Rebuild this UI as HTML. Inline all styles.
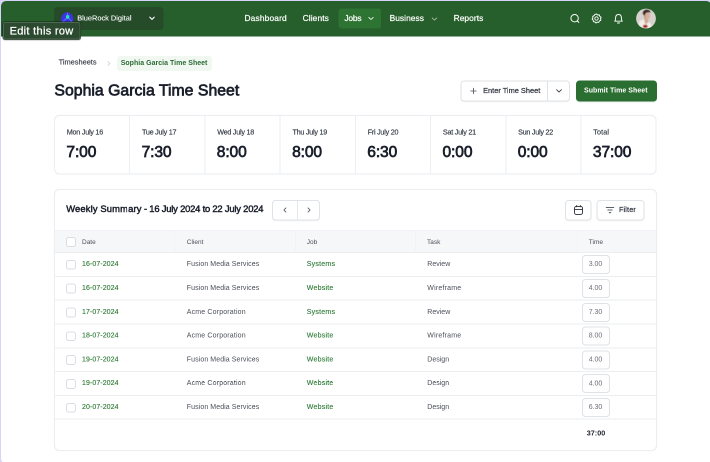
<!DOCTYPE html>
<html>
<head>
<meta charset="utf-8">
<title>Sophia Garcia Time Sheet</title>
<style>
*{box-sizing:border-box;margin:0;padding:0}
html,body{width:710px;height:462px;overflow:hidden;background:#d7d3fa;font-family:"Liberation Sans",sans-serif}
#bg{left:1px;top:1px;width:710.5px;height:462.5px;background:#fff;border-radius:5px}
#S{position:absolute;left:0;top:0;width:1420px;height:924px;transform:scale(.5);transform-origin:0 0;will-change:transform}
#L{position:absolute;left:0;top:0;width:710px;height:462px;zoom:2}
#L div,#L svg{position:absolute}
#hdr{left:1px;top:1px;width:710.5px;height:35.5px;background:#265f2b;border-radius:5px 5px 0 0}
.ws{left:54px;top:7px;width:109.5px;height:23px;background:#254b29;border-radius:4px}
.w{color:#fff;white-space:nowrap;line-height:1}
.nav{font-size:8.4px;-webkit-text-stroke:0.2px #fff}
.pill{left:338.4px;top:8.5px;width:43.1px;height:20px;background:#2d7433;border-radius:3px}
.tip{left:3px;top:22px;width:77.6px;height:17.5px;background:#2c4a30;border:1px solid #4c6850;border-radius:2px;box-shadow:0 0 0 0.5px rgba(10,25,12,.7),0 0.5px 1.5px rgba(0,0,0,.5)}
.t{white-space:nowrap;line-height:1}
.m{-webkit-text-stroke:0.25px currentColor}
.btn{border:1px solid #dfe2e6;border-radius:3.5px;background:#fff;box-shadow:0 1px 1px rgba(16,24,40,.04)}
.card{border:1px solid #eceef1;border-radius:5.5px;background:#fff;box-shadow:0 0 1px rgba(16,24,40,.06)}
.lbl{font-size:7.2px;color:#333945;letter-spacing:-0.24px;-webkit-text-stroke:0.15px #333945}
.val{font-size:15.6px;color:#1a1f2b;-webkit-text-stroke:0.7px #1a1f2b;letter-spacing:-0.12px}
.sep{width:1px;background:#eceef1}
.hl{height:1px;background:#eceef1;left:54.5px;width:601.5px}
.c{font-size:7px;color:#4b505a;white-space:nowrap;line-height:1}
.g{color:#2e7b35;-webkit-text-stroke:0.12px #2e7b35}
.h{font-size:6.5px;color:#4b505a;white-space:nowrap;line-height:1}
.cb{left:66px;width:9.8px;height:9.8px;border:1px solid #dadde3;border-radius:2.6px;background:#fff}
.inp{left:582.2px;width:27.6px;height:19px;border:1px solid #dfe2e6;border-radius:3.5px;background:#fff}
.iv{font-size:7px;color:#6b7079;white-space:nowrap;line-height:1;text-align:center;width:27px;left:582px}
</style>
</head>
<body>
<div id="S"><div id="L">
  <div id="bg"></div>
  <div id="hdr"></div>
  <div class="ws"></div>
  <svg style="left:60px;top:11px" width="15" height="15" viewBox="0 0 15 15">
    <path d="M7.2 1.2 C10.8 1.2 13.4 4.8 13.4 8.2 C13.4 11.6 10.6 13.4 7.2 13.4 C3.8 13.4 1 11.6 1 8.2 C1 4.8 3.6 1.2 7.2 1.2 Z" fill="#3a34e4"/>
    <path d="M7.4 1.6 L7.6 5 M2 11.8 L6.2 7.4 M12.8 11.8 L9 7.4" stroke="#8d90ff" stroke-opacity=".6" stroke-width="1" fill="none"/>
    <rect x="6" y="4.3" width="3.3" height="3.4" rx="0.5" fill="#25e3b4"/>
  </svg>
  <div class="w m" style="left:77.2px;top:14.6px;font-size:7.4px;-webkit-text-stroke:0.1px #fff">BlueRock Digital</div>
  <svg style="left:147.4px;top:14.2px" width="9" height="9" viewBox="0 0 9 9"><path d="M2.3 3.2 L4.5 5.4 L6.7 3.2" stroke="#fff" stroke-width="1.1" fill="none" stroke-linecap="round" stroke-linejoin="round"/></svg>
  <div class="pill"></div>
  <div class="w nav" style="left:244.5px;top:14.4px;letter-spacing:0.14px">Dashboard</div>
  <div class="w nav" style="left:302.6px;top:14.4px;letter-spacing:0.1px">Clients</div>
  <div class="w nav" style="left:344.4px;top:14.4px;letter-spacing:-0.2px">Jobs</div>
  <div class="w nav" style="left:389.6px;top:14.4px;letter-spacing:0.04px">Business</div>
  <div class="w nav" style="left:453.6px;top:14.4px;letter-spacing:0.05px">Reports</div>
  <svg style="left:366.3px;top:14.1px" width="9" height="9" viewBox="0 0 9 9"><path d="M2.3 3.4 L4.5 5.5 L6.7 3.4" stroke="#fff" stroke-width="0.85" fill="none" stroke-linecap="round" stroke-linejoin="round"/></svg>
  <svg style="left:429.9px;top:14.3px" width="9" height="9" viewBox="0 0 9 9"><path d="M2.2 3.4 L4.5 5.6 L6.8 3.4" stroke="#fff" stroke-opacity=".6" stroke-width="0.9" fill="none" stroke-linecap="round" stroke-linejoin="round"/></svg>
  <svg style="left:569px;top:12.5px" width="12" height="12" viewBox="0 0 12 12"><circle cx="5.6" cy="5.7" r="3.7" stroke="#fff" stroke-width="1" fill="none"/><path d="M8.3 8.4 L9.8 9.9" stroke="#fff" stroke-width="1" stroke-linecap="round"/></svg>
  <svg style="left:590.7px;top:12.5px" width="12" height="12" viewBox="0 0 12 12">
    <path d="M6 1.5 L7.2 2.5 L8.8 2.4 L9.3 3.9 L10.6 4.8 L10 6.2 L10.4 7.7 L9 8.4 L8.3 9.8 L6.8 9.6 L5.5 10.5 L4.4 9.4 L2.9 9.2 L2.7 7.7 L1.6 6.6 L2.4 5.3 L2.2 3.8 L3.6 3.2 L4.4 1.9 Z" stroke="#fff" stroke-width="0.95" fill="none" stroke-linejoin="round"/>
    <circle cx="6" cy="6" r="1.7" stroke="#fff" stroke-width="0.9" fill="none"/>
  </svg>
  <svg style="left:612.7px;top:12.5px" width="12" height="13" viewBox="0 0 12 13">
    <path d="M2.2 8.7 C3.2 7.8 3 6.6 3.1 5.2 C3.2 3.2 4.4 2 6 2 C7.6 2 8.8 3.2 8.9 5.2 C9 6.6 8.8 7.8 9.8 8.7 Z" stroke="#fff" stroke-width="0.95" fill="none" stroke-linejoin="round"/>
    <path d="M5 10.5 L7 10.5" stroke="#fff" stroke-width="1" stroke-linecap="round"/>
  </svg>
  <svg style="left:636.2px;top:8.7px" width="20" height="20" viewBox="0 0 20 20">
    <defs><clipPath id="av"><circle cx="10" cy="10" r="9.9"/></clipPath><filter id="bl" x="-20%" y="-20%" width="140%" height="140%"><feGaussianBlur stdDeviation="0.6"/></filter></defs>
    <g clip-path="url(#av)">
      <rect width="20" height="20" fill="#d6d3cf"/>
      <g filter="url(#bl)">
        <path d="M2.5 20 L3.2 13 L7.4 10.8 L9.8 15.6 L12.6 13.4 L15 15.4 L16 20 Z" fill="#f3eee8"/>
        <path d="M8.6 9.5 L8.8 14.4 L10 16 L12.2 13.4 L12.4 9.5 Z" fill="#d2a690"/>
        <ellipse cx="11" cy="7.3" rx="3.1" ry="3.9" fill="#d8b09d"/>
        <path d="M8.2 6.2 L8.4 10 L9.6 11.4 L9.4 6 Z" fill="#b98d7a"/>
        <path d="M6.9 4.6 C6.9 2 9.4 0.9 11.6 1.3 C13.4 1.7 14.5 2.8 14.4 4.2 C12.8 3.4 10.4 3.6 9.3 5.2 L8.8 7 C7.6 6.6 6.9 5.8 6.9 4.6 Z" fill="#33231f"/>
        <ellipse cx="9.3" cy="17.8" rx="2.4" ry="1.6" fill="#a3151c"/>
      </g>
    </g>
  </svg>
  <div class="tip"></div>
  <div class="w" style="left:9.6px;top:25.5px;font-size:11px;letter-spacing:0.31px;-webkit-text-stroke:0.25px #fff">Edit this row</div>
  <div class="t" style="left:58.6px;top:58.6px;font-size:7.4px;color:#3d424d;-webkit-text-stroke:0.15px #3d424d">Timesheets</div>
  <svg style="left:105px;top:59px" width="8" height="8" viewBox="0 0 8 8"><path d="M3 2.6 L4.9 4.5 L3 6.4" stroke="#d3d6e2" stroke-width="0.9" fill="none" stroke-linecap="round" stroke-linejoin="round"/></svg>
  <div style="left:117px;top:56px;width:95px;height:15px;background:#f0f8f1;border-radius:3px"></div>
  <div class="t" style="left:120.7px;top:59px;font-size:7px;font-weight:bold;color:#2d6b35;letter-spacing:0.02px">Sophia Garcia Time Sheet</div>
  <div class="t" style="left:54.4px;top:82.5px;font-size:15.8px;color:#1a1f2b;-webkit-text-stroke:0.7px #1a1f2b;letter-spacing:0.02px">Sophia Garcia Time Sheet</div>
  <div class="btn" style="left:460.5px;top:80.5px;width:109.5px;height:21px"></div>
  <div style="left:547px;top:81.5px;width:1px;height:19px;background:#dfe2e6"></div>
  <svg style="left:469.6px;top:86.9px" width="8" height="8" viewBox="0 0 8 8"><path d="M4 1.2 L4 6.8 M1.2 4 L6.8 4" stroke="#4a4f5a" stroke-width="0.8" fill="none" stroke-linecap="round"/></svg>
  <div class="t" style="left:483.1px;top:86.8px;font-size:7.4px;color:#2a2f3b;-webkit-text-stroke:0.2px #2a2f3b">Enter Time Sheet</div>
  <svg style="left:554.3px;top:86.6px" width="9" height="9" viewBox="0 0 9 9"><path d="M2.1 3.2 L4.5 5.6 L6.9 3.2" stroke="#3a3f4a" stroke-width="0.9" fill="none" stroke-linecap="round" stroke-linejoin="round"/></svg>
  <div style="left:576px;top:80.5px;width:80.8px;height:21px;background:#2b6e31;border-radius:3.5px;box-shadow:0 1px 1px rgba(16,24,40,.08)"></div>
  <div class="t" style="left:584px;top:86.5px;font-size:7px;font-weight:bold;color:#fff;letter-spacing:0.04px">Submit Time Sheet</div>
  <div class="card" style="left:54px;top:114.9px;width:602.4px;height:59.5px"></div>
  <div class="t lbl" style="left:66.8px;top:128.5px">Mon July 16</div>
  <div class="t val" style="left:66.4px;top:144px">7:00</div>
  <div class="sep" style="left:129.2px;top:115.9px;height:57.5px"></div>
  <div class="t lbl" style="left:142.0px;top:128.5px">Tue July 17</div>
  <div class="t val" style="left:141.6px;top:144px">7:30</div>
  <div class="sep" style="left:204.4px;top:115.9px;height:57.5px"></div>
  <div class="t lbl" style="left:217.2px;top:128.5px">Wed July 18</div>
  <div class="t val" style="left:216.8px;top:144px">8:00</div>
  <div class="sep" style="left:279.7px;top:115.9px;height:57.5px"></div>
  <div class="t lbl" style="left:292.5px;top:128.5px">Thu July 19</div>
  <div class="t val" style="left:292.1px;top:144px">8:00</div>
  <div class="sep" style="left:354.9px;top:115.9px;height:57.5px"></div>
  <div class="t lbl" style="left:367.7px;top:128.5px">Fri July 20</div>
  <div class="t val" style="left:367.3px;top:144px">6:30</div>
  <div class="sep" style="left:430.1px;top:115.9px;height:57.5px"></div>
  <div class="t lbl" style="left:442.9px;top:128.5px">Sat July 21</div>
  <div class="t val" style="left:442.5px;top:144px">0:00</div>
  <div class="sep" style="left:505.3px;top:115.9px;height:57.5px"></div>
  <div class="t lbl" style="left:518.1px;top:128.5px">Sun July 22</div>
  <div class="t val" style="left:517.7px;top:144px">0:00</div>
  <div class="sep" style="left:580.5px;top:115.9px;height:57.5px"></div>
  <div class="t lbl" style="left:593.3px;top:128.5px;letter-spacing:0.12px">Total</div>
  <div class="t val" style="left:592.9px;top:144px">37:00</div>
  <div class="card" style="left:54px;top:188.8px;width:602.9px;height:262.1px"></div>
  <div class="t" style="left:66.2px;top:204.7px;font-size:9.4px;color:#1a1f2b;-webkit-text-stroke:0.45px #1a1f2b"><span style="letter-spacing:0.14px">Weekly Summary</span><span style="letter-spacing:-0.2px"> - 16 July 2024 to 22 July 2024</span></div>
  <div class="btn" style="left:272px;top:199.8px;width:48.2px;height:20.6px"></div>
  <div style="left:297px;top:200.8px;width:1px;height:18.6px;background:#e4e7eb"></div>
  <svg style="left:280.7px;top:205.4px" width="9" height="9" viewBox="0 0 9 9"><path d="M5.4 2.4 L3.4 4.5 L5.4 6.6" stroke="#4d5360" stroke-width="0.85" fill="none" stroke-linecap="round" stroke-linejoin="round"/></svg>
  <svg style="left:304.4px;top:205.4px" width="9" height="9" viewBox="0 0 9 9"><path d="M3.6 2.4 L5.6 4.5 L3.6 6.6" stroke="#4d5360" stroke-width="0.85" fill="none" stroke-linecap="round" stroke-linejoin="round"/></svg>
  <div class="btn" style="left:565px;top:199.8px;width:26.3px;height:20.6px"></div>
  <svg style="left:572.5px;top:204px" width="12" height="12" viewBox="0 0 12 12">
    <rect x="2" y="2.4" width="8" height="8" rx="1.8" stroke="#2a2f3b" stroke-width="0.9" fill="none"/>
    <path d="M2 5.4 L10 5.4 M4.2 1.4 L4.2 2.8 M7.8 1.4 L7.8 2.8" stroke="#2a2f3b" stroke-width="0.9" fill="none" stroke-linecap="round"/>
  </svg>
  <div class="btn" style="left:596.7px;top:199.8px;width:47.8px;height:20.6px"></div>
  <svg style="left:604px;top:204px" width="12" height="12" viewBox="0 0 12 12"><path d="M2.2 3.5 L9.8 3.5 M3.8 6 L8.2 6 M5.2 8.7 L6.8 8.7" stroke="#2a2f3b" stroke-width="0.85" fill="none" stroke-linecap="round"/></svg>
  <div class="t" style="left:619px;top:205.9px;font-size:7.2px;color:#2a2f3b;-webkit-text-stroke:0.2px #2a2f3b;letter-spacing:0.15px">Filter</div>
  <div style="left:55px;top:230.5px;width:600.9px;height:22px;background:#f6f7f9"></div>
  <div class="hl" style="top:230px;background:#f1f2f5"></div>
  <div class="cb" style="top:237.2px"></div>
  <div style="left:174.7px;top:231px;width:1px;height:21px;background:#f2f3f6"></div>
  <div style="left:294.9px;top:231px;width:1px;height:21px;background:#f2f3f6"></div>
  <div style="left:415.2px;top:231px;width:1px;height:21px;background:#f2f3f6"></div>
  <div style="left:576.5px;top:231px;width:1px;height:21px;background:#f2f3f6"></div>
  <div class="h" style="left:82px;top:238.6px">Date</div>
  <div class="h" style="left:186.8px;top:238.6px">Client</div>
  <div class="h" style="left:306.8px;top:238.6px">Job</div>
  <div class="h" style="left:427px;top:238.6px">Task</div>
  <div class="h" style="left:588.8px;top:238.6px">Time</div>
  <div class="hl" style="top:252.0px"></div>
  <div class="cb" style="top:259.9px"></div>
  <div class="c g" style="left:82px;top:260.1px;letter-spacing:0.08px">16-07-2024</div>
  <div class="c" style="left:186.8px;top:260.1px;letter-spacing:0.08px">Fusion Media Services</div>
  <div class="c g" style="left:306.8px;top:260.1px;letter-spacing:0.22px">Systems</div>
  <div class="c" style="left:427.3px;top:260.1px;letter-spacing:0px">Review</div>
  <div class="inp" style="top:255.1px"></div>
  <div class="iv" style="top:260.2px">3.00</div>
  <div class="hl" style="top:275.8px"></div>
  <div class="cb" style="top:283.7px"></div>
  <div class="c g" style="left:82px;top:283.9px;letter-spacing:0.08px">16-07-2024</div>
  <div class="c" style="left:186.8px;top:283.9px;letter-spacing:0.08px">Fusion Media Services</div>
  <div class="c g" style="left:306.8px;top:283.9px;letter-spacing:0.22px">Website</div>
  <div class="c" style="left:427.3px;top:283.9px;letter-spacing:0.2px">Wireframe</div>
  <div class="inp" style="top:278.9px"></div>
  <div class="iv" style="top:284.0px">4.00</div>
  <div class="hl" style="top:299.6px"></div>
  <div class="cb" style="top:307.6px"></div>
  <div class="c g" style="left:82px;top:307.8px;letter-spacing:0.08px">17-07-2024</div>
  <div class="c" style="left:186.8px;top:307.8px;letter-spacing:0.16px">Acme Corporation</div>
  <div class="c g" style="left:306.8px;top:307.8px;letter-spacing:0.22px">Systems</div>
  <div class="c" style="left:427.3px;top:307.8px;letter-spacing:0px">Review</div>
  <div class="inp" style="top:302.8px"></div>
  <div class="iv" style="top:307.9px">7.30</div>
  <div class="hl" style="top:323.5px"></div>
  <div class="cb" style="top:331.4px"></div>
  <div class="c g" style="left:82px;top:331.6px;letter-spacing:0.08px">18-07-2024</div>
  <div class="c" style="left:186.8px;top:331.6px;letter-spacing:0.16px">Acme Corporation</div>
  <div class="c g" style="left:306.8px;top:331.6px;letter-spacing:0.22px">Website</div>
  <div class="c" style="left:427.3px;top:331.6px;letter-spacing:0.2px">Wireframe</div>
  <div class="inp" style="top:326.6px"></div>
  <div class="iv" style="top:331.7px">8.00</div>
  <div class="hl" style="top:347.3px"></div>
  <div class="cb" style="top:355.2px"></div>
  <div class="c g" style="left:82px;top:355.4px;letter-spacing:0.08px">19-07-2024</div>
  <div class="c" style="left:186.8px;top:355.4px;letter-spacing:0.08px">Fusion Media Services</div>
  <div class="c g" style="left:306.8px;top:355.4px;letter-spacing:0.22px">Website</div>
  <div class="c" style="left:427.3px;top:355.4px;letter-spacing:0px">Design</div>
  <div class="inp" style="top:350.4px"></div>
  <div class="iv" style="top:355.5px">4.00</div>
  <div class="hl" style="top:371.1px"></div>
  <div class="cb" style="top:379.0px"></div>
  <div class="c g" style="left:82px;top:379.2px;letter-spacing:0.08px">19-07-2024</div>
  <div class="c" style="left:186.8px;top:379.2px;letter-spacing:0.16px">Acme Corporation</div>
  <div class="c g" style="left:306.8px;top:379.2px;letter-spacing:0.22px">Website</div>
  <div class="c" style="left:427.3px;top:379.2px;letter-spacing:0px">Design</div>
  <div class="inp" style="top:374.2px"></div>
  <div class="iv" style="top:379.3px">4.00</div>
  <div class="hl" style="top:394.9px"></div>
  <div class="cb" style="top:402.8px"></div>
  <div class="c g" style="left:82px;top:403.0px;letter-spacing:0.08px">20-07-2024</div>
  <div class="c" style="left:186.8px;top:403.0px;letter-spacing:0.08px">Fusion Media Services</div>
  <div class="c g" style="left:306.8px;top:403.0px;letter-spacing:0.22px">Website</div>
  <div class="c" style="left:427.3px;top:403.0px;letter-spacing:0px">Design</div>
  <div class="inp" style="top:398.0px"></div>
  <div class="iv" style="top:403.1px">6.30</div>
  <div class="hl" style="top:418.7px"></div>
  <div class="t" style="left:586.8px;top:429.7px;font-size:7.2px;font-weight:bold;color:#1f2430">37:00</div>
</div></div>
</body>
</html>
